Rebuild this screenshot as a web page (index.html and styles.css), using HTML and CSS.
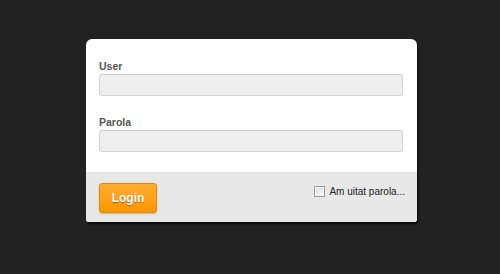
FILE: index.html
```html
<!DOCTYPE html>
<html lang="ro">
<head>
  <meta charset="UTF-8" />
  <meta name="viewport" content="width=device-width, initial-scale=1.0"/>
  <title>Login</title>
  <link rel="stylesheet" href="styles.css">
</head>
<body>

<form class="login-box" action="#" method="POST">
  <div class="fields">
    <label class="field">
      <span class="field-label">User</span>
      <input class="field-input" type="text" name="user">
    </label>
    <label class="field">
      <span class="field-label">Parola</span>
      <input class="field-input" type="password" name="parola">
    </label>
  </div>

  <div class="actions">
    <button class="btn-login" type="submit">Login</button>
    <label class="forgot">
      <input class="check" type="checkbox" name="forgot">
      <span>Am uitat parola...</span>
    </label>
  </div>
</form>

</body>
</html>
```

FILE: styles.css
```css
* { box-sizing: border-box; }
body {
  margin: 0;
  padding: 39px 0 0 86px;
  background: #222;
  font-family: 'Liberation Sans', Arial, sans-serif;
  height: 274px;
}
.login-box {
  width: 331px;
  background: #fff;
  border-radius: 6px 6px 3px 3px;
  box-shadow: 1px 2px 2px rgba(0,0,0,0.7);
  overflow: hidden;
}
.fields {
  padding: 21px 13px 20px 13px;
  display: flex;
  flex-direction: column;
  gap: 20px;
}
.field {
  display: flex;
  flex-direction: column;
  gap: 1px;
}
.field-label {
  font-size: 10.5px;
  font-weight: bold;
  color: #555;
  line-height: 13px;
}
.field-input {
  width: 304px;
  height: 22px;
  margin: 0;
  background: #efefef;
  border: 1px solid #d4d4d4;
  border-top-color: #cacaca;
  border-radius: 3px;
  outline: none;
}
.actions {
  height: 50px;
  background: #e8e8e8;
  border-top: 1px dotted #dadada;
  display: flex;
  align-items: flex-start;
  justify-content: space-between;
  padding: 10px 12px 0 13px;
}
.btn-login {
  width: 58px;
  height: 30px;
  margin: 0;
  padding: 0;
  font-family: 'Liberation Sans', Arial, sans-serif;
  font-size: 12px;
  font-weight: bold;
  color: #fff;
  text-shadow: 0 1px 1px rgba(150,70,0,0.7);
  background: linear-gradient(#ffad33, #fb9700);
  border: 1px solid #e58a00;
  border-radius: 3px;
  box-shadow: 0 1px 2px rgba(0,0,0,0.2);
  cursor: pointer;
}
.forgot {
  display: flex;
  align-items: center;
  gap: 4px;
  margin-top: 3px;
  font-size: 10px;
  color: #222;
}
.check {
  appearance: none;
  width: 11px;
  height: 11px;
  margin: 0;
  border: 1px solid #999;
  background: linear-gradient(135deg, #dcdcdc, #f8f8f8);
  box-shadow: inset 1px 1px 0 #fff;
}
```
